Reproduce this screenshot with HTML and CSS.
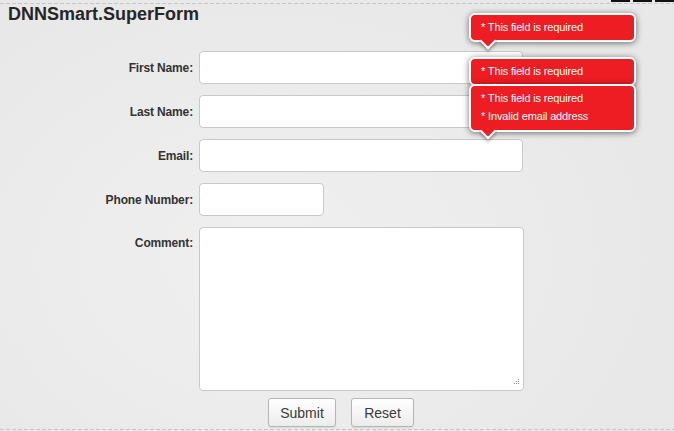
FILE: index.html
```html
<!DOCTYPE html>
<html>
<head>
<meta charset="utf-8">
<link rel="stylesheet" href="styles.css">
</head>
<body>
<div class="page">
  <div class="topbar"><span class="blk"></span><span class="blk"></span><span class="blk"></span></div>
  <div class="dash"></div>
  <h1 class="title">DNNSmart.SuperForm</h1>
  <form class="form">
    <label class="lbl">First Name:</label>
    <input class="field wide" type="text">
    <label class="lbl">Last Name:</label>
    <input class="field wide" type="text">
    <label class="lbl">Email:</label>
    <input class="field wide" type="text">
    <label class="lbl">Phone Number:</label>
    <input class="field short" type="text">
    <label class="lbl lbl-top">Comment:</label>
    <div class="area-wrap">
      <textarea class="field area"></textarea>
      <svg class="grip" width="8" height="8" viewBox="0 0 8 8">
        <rect x="6" y="0" width="1" height="1" fill="#8a8a8a"/>
        <rect x="4" y="2" width="1" height="1" fill="#8a8a8a"/>
        <rect x="6" y="2" width="1" height="1" fill="#8a8a8a"/>
        <rect x="2" y="4" width="1" height="1" fill="#8a8a8a"/>
        <rect x="4" y="4" width="1" height="1" fill="#8a8a8a"/>
        <rect x="6" y="4" width="1" height="1" fill="#8a8a8a"/>
      </svg>
    </div>
    <div class="actions">
      <button type="button" class="btn btn-submit">Submit</button>
      <button type="button" class="btn btn-reset">Reset</button>
    </div>
  </form>
  <div class="dash dash-bottom"></div>

  <div class="tip tip1"><div>* This field is required</div><span class="arrow"></span></div>
  <div class="tip tip2"><div>* This field is required</div><span class="arrow"></span></div>
  <div class="tip tip3"><div>* This field is required</div><div>* Invalid email address</div><span class="arrow"></span></div>
</div>
</body>
</html>
```
FILE: styles.css
```css
html, body {
  margin: 0;
  padding: 0;
}
body {
  width: 674px;
  height: 431px;
  overflow: hidden;
  background: radial-gradient(ellipse 60% 70% at 40% 60%, #f0f0f0 0%, #ebebeb 60%, #e8e8e8 100%);
  font-family: "Liberation Sans", Arial, sans-serif;
}
.page {
  position: relative;
  width: 674px;
  height: 431px;
}
.topbar {
  height: 2px;
  display: flex;
  justify-content: flex-end;
  gap: 3px;
}
.blk {
  width: 19px;
  height: 2px;
  background: #111;
}
.dash {
  height: 1px;
  margin-top: 1px;
  background: repeating-linear-gradient(to right, #c6c6c6 0 4px, transparent 4px 6px);
}
.title {
  margin: 0;
  padding: 1px 0 0 8px;
  font-size: 18px;
  line-height: 18px;
  font-weight: bold;
  color: #262626;
  height: 46px;
}
.form {
  display: grid;
  grid-template-columns: 193px auto;
  column-gap: 6px;
  row-gap: 11px;
  justify-content: start;
  align-items: center;
  align-content: start;
  margin: 0;
  height: 378px;
}
.lbl {
  text-align: right;
  font-size: 12px;
  font-weight: bold;
  color: #333;
  letter-spacing: -0.15px;
}
.lbl-top {
  align-self: start;
  padding-top: 9px;
}
.field {
  box-sizing: border-box;
  height: 33px;
  border: 1px solid #c9c9c9;
  border-radius: 4px;
  background: #fff;
  margin: 0;
  padding: 4px 6px;
  font-family: "Liberation Sans", Arial, sans-serif;
  font-size: 13px;
  outline: none;
}
.wide {
  width: 324px;
}
.short {
  width: 125px;
}
.area-wrap {
  position: relative;
  width: 325px;
  height: 164px;
}
.area {
  display: block;
  width: 325px;
  height: 164px;
  resize: none;
}
.grip {
  position: absolute;
  right: 4px;
  bottom: 4px;
}
.actions {
  grid-column: 1 / span 2;
  display: flex;
  justify-content: center;
  gap: 15px;
  width: 674px;
  padding-left: 8px;
  box-sizing: border-box;
  margin-top: -4px;
}
.btn {
  box-sizing: border-box;
  height: 29px;
  border: 1px solid #b5b5b5;
  border-radius: 3px;
  background: linear-gradient(#ffffff, #ececec);
  font-family: "Liberation Sans", Arial, sans-serif;
  font-size: 14px;
  color: #3a3a3a;
  padding: 0;
  box-shadow: 0 1px 1px rgba(0,0,0,0.08);
}
.btn-submit { width: 68px; }
.btn-reset { width: 63px; }
.dash-bottom {
  position: absolute;
  left: 0;
  right: 0;
  top: 429px;
  margin: 0;
}
.tip {
  position: absolute;
  left: 469px;
  width: 167px;
  box-sizing: border-box;
  background: #ee1c23;
  border: 2px solid #fff;
  border-radius: 6px;
  box-shadow: 0 1px 6px rgba(0,0,0,0.55);
  color: #fff;
  font-size: 11px;
  letter-spacing: -0.15px;
  line-height: 18px;
  padding: 3px 10px 4px 10px;
}
.tip1 { top: 13px; }
.tip2 { top: 57px; }
.tip3 { top: 84px; padding-bottom: 5px; }
.arrow {
  position: absolute;
  left: 11px;
  bottom: -7px;
  width: 10px;
  height: 10px;
  background: #ee1c23;
  border-right: 2px solid #fff;
  border-bottom: 2px solid #fff;
  transform: rotate(45deg);
  box-shadow: 2px 2px 3px rgba(0,0,0,0.3);
}
```
